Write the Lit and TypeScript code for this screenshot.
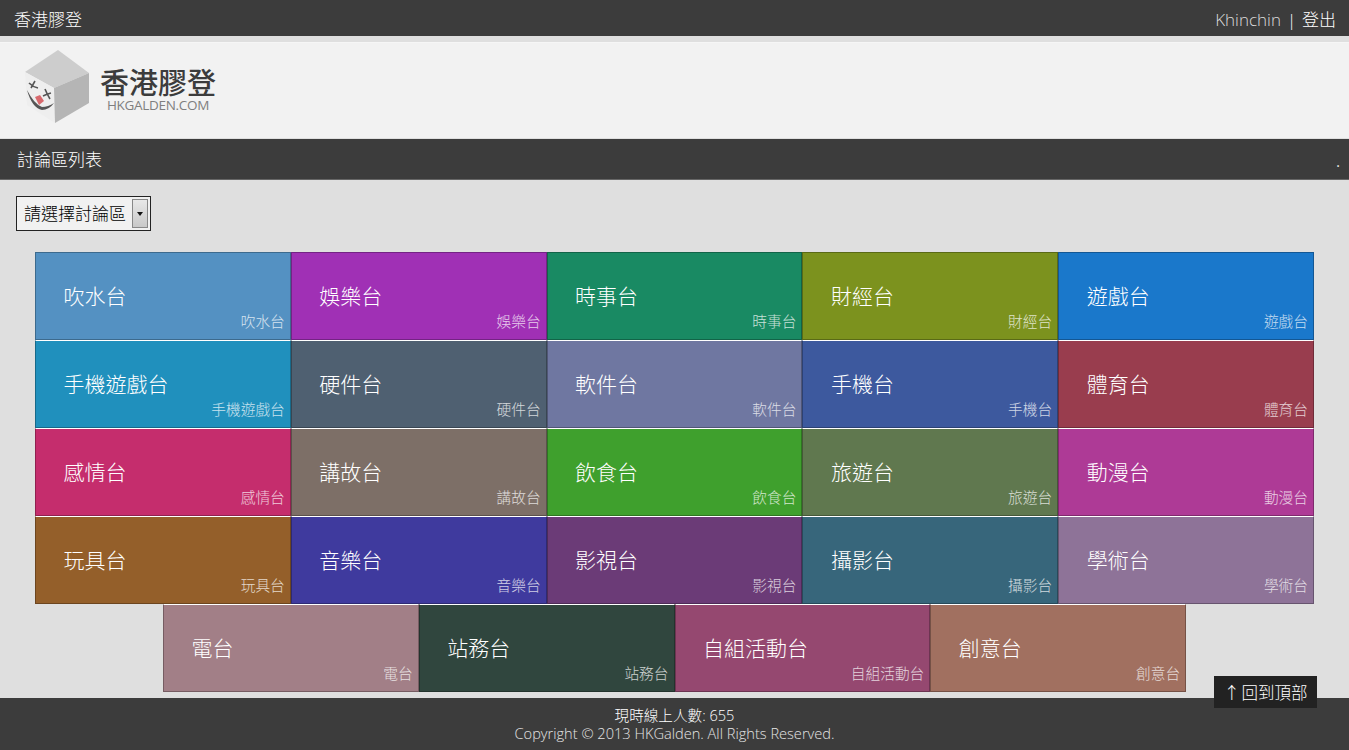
import { LitElement, html, css, svg } from "lit";
import { customElement } from "lit/decorators.js";

const tiles: [string, string, string][] = [
  ["吹水台", "#5491c2", "#3d6a8d"], ["娛樂台", "#a030b5", "#742384"], ["時事台", "#198a63", "#126448"], ["財經台", "#7c921e", "#5a6a16"], ["遊戲台", "#1a78cb", "#135794"],
  ["手機遊戲台", "#2090bd", "#176989"], ["硬件台", "#4f6071", "#394652"], ["軟件台", "#6f77a1", "#515675"], ["手機台", "#3d599e", "#2c4173"], ["體育台", "#993d4e", "#6f2c39"],
  ["感情台", "#c52d6d", "#8f214f"], ["講故台", "#7d6f67", "#5b514b"], ["飲食台", "#3fa02d", "#2e7421"], ["旅遊台", "#60784f", "#465739"], ["動漫台", "#ae3a96", "#7f2a6d"],
  ["玩具台", "#945f2a", "#6c451f"], ["音樂台", "#3f3a9e", "#2e2a73"], ["影視台", "#6b3b77", "#4e2b57"], ["攝影台", "#37667b", "#284a5a"], ["學術台", "#8e7398", "#67546f"],
  ["電台", "#a27f87", "#765c62"], ["站務台", "#30463e", "#23332d"], ["自組活動台", "#954870", "#6c3451"], ["創意台", "#a17060", "#755146"],
];

@customElement("app-root")
export class AppRoot extends LitElement {
  static styles = css`
    :host { display: flex; flex-direction: column; height: 750px; overflow: hidden; position: relative; background: #dfdfdf;
      font-family: "Open Sans", "Noto Sans CJK TC", sans-serif; color: #fff; }
    .top { height: 36px; flex: none; background: #3c3c3c; display: flex; justify-content: space-between; align-items: center; padding: 0 13px 0 14px; font-size: 17px; font-weight: 300; }
    .top .user { color: #ddd; }
    .top .sep { margin: 0 1.5px; }
    .head { height: 96px; flex: none; margin-top: 6px; margin-bottom: 1px; background: #f2f2f2; border-top: 1px solid #f6f6f6; box-sizing: border-box; display: flex; align-items: flex-start; padding: 7px 0 0 25px; gap: 10px; }
    .brand { display: flex; flex-direction: column; align-items: center; margin-top: 18px; }
    .brand b { font-size: 29px; line-height: 29px; font-weight: 500; color: #3c3c3c; }
    .brand span { font-size: 13.5px; line-height: 14px; margin-top: 1px; color: #7f7f7f; letter-spacing: -0.3px; }
    .title { height: 41px; flex: none; box-sizing: border-box; background: #3c3c3c; border-bottom: 1px solid #666; display: flex; justify-content: space-between; align-items: center; padding: 0 9px 2px 17px; font-size: 17px; font-weight: 300; }
    .title i { font-style: normal; color: #eee; font-size: 14px; padding-top: 6px; font-weight: 400; }
    .main { flex: 1; display: flex; flex-direction: column; min-height: 0; }
    .pick { align-self: flex-start; margin: 16px 0 0 16px; width: 135px; height: 35px; box-sizing: border-box; border: 1px solid #222; background: #f1f1f1; display: flex; align-items: center; justify-content: space-between; padding: 0 2px 0 7px; color: #000; font-size: 17px; font-weight: 300; }
    .pick span:first-child { padding-bottom: 3px; }
    .arrow { width: 16px; height: 29px; box-sizing: border-box; border: 1px solid #888; background: linear-gradient(#e8e8e8, #c8c8c8); display: flex; align-items: center; justify-content: center; }
    .arrow::after { content: ""; border: 3.5px solid transparent; border-top: 4px solid #111; border-bottom: 0; }
    .grid { display: flex; flex-wrap: wrap; justify-content: center; margin: 21px 35px 0; }
    .tile { width: 20%; height: 88px; box-sizing: border-box; border-style: solid; border-width: 1px; display: flex; flex-direction: column; position: relative; }
    .big { font-size: 21px; font-weight: 300; line-height: 28px; padding: 29px 0 0 27.5px; }
    .small { position: absolute; right: 5px; bottom: 9px; font-size: 14.7px; line-height: 18px; font-weight: 300; opacity: .75; }
    .foot { height: 52px; flex: none; background: #3c3c3c; display: flex; flex-direction: column; align-items: center; padding-top: 8px; box-sizing: border-box; font-size: 14.6px; line-height: 18px; font-weight: 300; margin-top: 6px; }
    .foot div:last-child { color: #e4e4e4; }
    .back { position: absolute; left: 1214px; top: 676px; width: 103px; height: 32px; background: #222; display: flex; align-items: center; justify-content: center; font-size: 16.5px; font-weight: 300; word-spacing: -3px; }
  `;

  logo() {
    return svg`<svg width="65" height="74" viewBox="0 0 65 74">
      <polygon points="0,22 33,0 64,23 29,38" fill="#cdcdcd"/>
      <polygon points="0,22 29,38 30,73 2,55" fill="#eeeeee"/>
      <polygon points="29,38 64,23 64,53 30,73" fill="#b5b5b5"/>
      <path d="M2 40 Q7 58 17 60 Q24 60 29 53 Q23 57 17 57 Q9 54 2 40Z" fill="#555"/>
      <path d="M4 33 Q8 37 13 38 M6 38 L10 31" fill="none" stroke="#555" stroke-width="1.6"/>
      <path d="M18 46 Q22 44 26 43 M20 39 Q22 44 25 49" fill="none" stroke="#555" stroke-width="1.6"/>
      <polygon points="10,47 15,45 19,51 14,55" fill="#d8686c"/>
    </svg>`;
  }

  render() {
    return html`
      <div class="top"><span>香港膠登</span><span><span class="user">Khinchin</span><span class="sep"> | </span>登出</span></div>
      <div class="head">${this.logo()}<div class="brand"><b>香港膠登</b><span>HKGALDEN.COM</span></div></div>
      <div class="title"><span>討論區列表</span><i>.</i></div>
      <div class="main">
        <div class="pick"><span>請選擇討論區</span><span class="arrow"></span></div>
        <div class="grid">
          ${tiles.map(([n, bg, bd], i) => html`<div class="tile" style="background:${bg};border-color:${bd};border-top-color:${i < 5 ? bd : "#fff"}"><span class="big">${n}</span><span class="small">${n}</span></div>`)}
        </div>
      </div>
      <div class="foot"><div>現時線上人數: 655</div><div>Copyright © 2013 HKGalden. All Rights Reserved.</div></div>
      <div class="back">↑ 回到頂部</div>
    `;
  }
}
